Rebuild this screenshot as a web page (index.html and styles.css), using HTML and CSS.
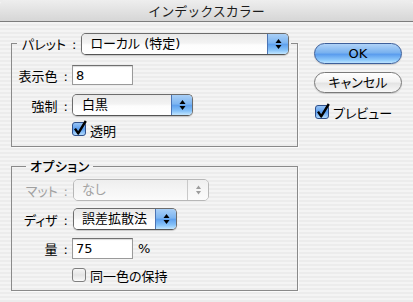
FILE: index.html
```html
<!DOCTYPE html>
<html lang="ja">

<head>
    <meta charset="UTF-8">
    <title>インデックスカラー</title>
    <link rel="stylesheet" href="styles.css">
</head>

<body>
    <div class="window">
        <div class="titlebar">インデックスカラー</div>

        <div class="content">
            <div class="groups">
                <fieldset class="group group-palette">
                    <legend class="palette-legend">
                        <span class="legend-label">パレット<span class="colon">:</span></span>
                        <span class="popup popup-palette">
                            <span class="popup-text">ローカル (特定)</span>
                            <span class="popup-arrows">
                                <svg width="7" height="12" viewBox="0 0 7 12"><polygon points="3.5,1 6.5,5 0.5,5" /><polygon points="0.5,7 6.5,7 3.5,11" /></svg>
                            </span>
                        </span>
                    </legend>

                    <div class="row row-colors">
                        <span class="label">表示色<span class="colon">:</span></span>
                        <span class="field">8</span>
                    </div>
                    <div class="row row-forced">
                        <span class="label">強制<span class="colon">:</span></span>
                        <span class="popup popup-forced">
                            <span class="popup-text">白黒</span>
                            <span class="popup-arrows">
                                <svg width="7" height="12" viewBox="0 0 7 12"><polygon points="3.5,1 6.5,5 0.5,5" /><polygon points="0.5,7 6.5,7 3.5,11" /></svg>
                            </span>
                        </span>
                    </div>
                    <div class="row row-check">
                        <span class="label"></span>
                        <span class="check checked">
                            <svg width="17" height="17" viewBox="0 0 17 17">
                                <defs>
                                    <linearGradient id="blueBox" x1="0" y1="0" x2="0" y2="1">
                                        <stop offset="0" stop-color="#9cc6f4" />
                                        <stop offset="0.5" stop-color="#5a9def" />
                                        <stop offset="1" stop-color="#b9e0ff" />
                                    </linearGradient>
                                </defs>
                                <rect x="0.5" y="2.5" width="13" height="13" rx="2.5" fill="url(#blueBox)" stroke="#2f4f8a" />
                                <path d="M3 8.6 L6.2 13.4 L13.8 1" fill="none" stroke="#000" stroke-width="2.4" stroke-linejoin="round" />
                            </svg>
                            <span class="check-text">透明</span>
                        </span>
                    </div>
                </fieldset>

                <fieldset class="group group-options">
                    <legend class="options-legend">オプション</legend>

                    <div class="row row-matte">
                        <span class="label disabled">マット<span class="colon">:</span></span>
                        <span class="popup popup-matte is-disabled">
                            <span class="popup-text">なし</span>
                            <span class="popup-arrows">
                                <svg width="7" height="12" viewBox="0 0 7 12"><polygon points="3.5,1.5 6,5 1,5" /><polygon points="1,7 6,7 3.5,10.5" /></svg>
                            </span>
                        </span>
                    </div>
                    <div class="row row-dither">
                        <span class="label">ディザ<span class="colon">:</span></span>
                        <span class="popup popup-dither">
                            <span class="popup-text">誤差拡散法</span>
                            <span class="popup-arrows">
                                <svg width="7" height="12" viewBox="0 0 7 12"><polygon points="3.5,1 6.5,5 0.5,5" /><polygon points="0.5,7 6.5,7 3.5,11" /></svg>
                            </span>
                        </span>
                    </div>
                    <div class="row row-amount">
                        <span class="label">量<span class="colon">:</span></span>
                        <span class="field">75</span>
                        <span class="unit">%</span>
                    </div>
                    <div class="row row-check">
                        <span class="label"></span>
                        <span class="check">
                            <span class="box"></span>
                            <span class="check-text">同一色の保持</span>
                        </span>
                    </div>
                </fieldset>
            </div>

            <div class="actions">
                <span class="button button-default">OK</span>
                <span class="button">キャンセル</span>
                <span class="check preview">
                    <svg width="17" height="17" viewBox="0 0 17 17">
                        <rect x="0.5" y="2.5" width="13" height="13" rx="2.5" fill="url(#blueBox)" stroke="#2f4f8a" />
                        <path d="M3 8.6 L6.2 13.4 L13.8 1" fill="none" stroke="#000" stroke-width="2.4" stroke-linejoin="round" />
                    </svg>
                    <span class="check-text">プレビュー</span>
                </span>
            </div>
        </div>
    </div>
</body>

</html>
```

FILE: styles.css
```css
body {
    margin: 0;
    font-family: "DejaVu Sans", "Noto Sans CJK JP", sans-serif;
    font-size: 13px;
    color: #000;
    background: repeating-linear-gradient(#ececec 0, #ececec 2px, #f4f4f4 2px, #f4f4f4 4px);
}

.window {
    width: 413px;
    height: 302px;
    overflow: hidden;
}

.titlebar {
    height: 21px;
    line-height: 22px;
    text-align: center;
    color: #1c1c1c;
    font-family: "Noto Sans CJK JP", sans-serif;
    background: linear-gradient(#eeeeee, #d6d6d6);
    border-bottom: 1px solid #7c7c7c;
    border-radius: 5px 5px 0 0;
}

.content {
    display: flex;
    padding: 11px 0 0 11px;
}

.groups {
    width: 287px;
}

/* group boxes */

.group {
    margin: 0;
    padding: 11px 0 8px 0;
    border: 1px solid #8a8a8a;
    box-shadow: 1px 1px 0 #fbfbfb;
    min-inline-size: 0;
}

.palette-legend {
    display: flex;
    align-items: center;
    margin-left: 5px;
    padding: 0 2px 0 5px;
    height: 21px;
}

.legend-label {
    font-feature-settings: "palt" 1;
    margin-right: 5px;
}

.group-options {
    margin-top: 11px;
    padding: 5px 0 7px 0;
}

.options-legend {
    margin-left: 14px;
    padding: 0 3px 0 4px;
    line-height: 16px;
    font-weight: 500;
    font-family: "Noto Sans CJK JP", sans-serif;
    font-feature-settings: "palt" 1;
    letter-spacing: 0.5px;
}

.colon {
    margin-left: 6px;
}

.row {
    display: flex;
    align-items: center;
}

.row .label {
    width: 56px;
    margin-right: 4px;
    text-align: right;
    font-feature-settings: "palt" 1;
    white-space: nowrap;
}

.label.disabled {
    color: #a0a0a0;
}

.row-colors { height: 20px; }
.row-forced { height: 22px; margin-top: 9px; }
.row-check { height: 16px; margin-top: 6px; }

.row-matte { height: 22px; }
.row-dither { height: 22px; margin-top: 7px; }
.row-amount { height: 21px; margin-top: 8px; }
.group-options .row-check { margin-top: 8px; }

/* text fields */

.field {
    box-sizing: border-box;
    width: 61px;
    height: 100%;
    padding-left: 3px;
    line-height: 19px;
    background: #fff;
    border: 1px solid #9a9a9a;
    border-top-color: #707070;
    box-shadow: inset 0 1px 1px rgba(0, 0, 0, 0.15);
}

.unit {
    margin-left: 5px;
}

/* popup menus */

.popup {
    box-sizing: border-box;
    display: flex;
    height: 22px;
    border: 1px solid #6c6c6c;
    border-bottom-color: #555;
    border-radius: 5px;
    overflow: hidden;
    box-shadow: 0 1px 1px rgba(0, 0, 0, 0.18);
    font-feature-settings: "palt" 1;
}

.popup-text {
    flex: 1;
    padding-left: 8px;
    line-height: 20px;
    white-space: nowrap;
    background: linear-gradient(#e9e9e9 0%, #f3f3f3 45%, #fdfdfd 55%, #ffffff 100%);
}

.popup-arrows {
    width: 20px;
    display: flex;
    align-items: center;
    justify-content: center;
    border-left: 1px solid #4b74b4;
    background: linear-gradient(#a9cff6 0%, #7db5f1 45%, #5fa1ee 52%, #86c2f8 80%, #c2e6ff 100%);
}

.popup-arrows svg {
    fill: #000;
}

.popup-palette { width: 208px; }
.popup-forced { width: 121px; }
.popup-forced .popup-text { padding-left: 9px; }
.popup-matte { width: 136px; margin-left: 1px; }
.popup-dither { width: 104px; margin-left: 1px; }

.popup.is-disabled {
    border-color: #b7b7b7;
    box-shadow: none;
}

.is-disabled .popup-text {
    color: #a3a3a3;
    background: linear-gradient(#eeeeee 0%, #f5f5f5 50%, #fbfbfb 100%);
}

.is-disabled .popup-arrows {
    border-left-color: #c9c9c9;
    background: linear-gradient(#efefef 0%, #f6f6f6 50%, #fbfbfb 100%);
}

.is-disabled .popup-arrows svg {
    fill: #9c9c9c;
}

/* checkboxes */

.check {
    display: flex;
    align-items: center;
    font-feature-settings: "palt" 1;
}

.check svg {
    margin-top: -3px;
}

.check-text {
    margin-left: 1px;
}

.box {
    box-sizing: border-box;
    width: 14px;
    height: 14px;
    margin-right: 3px;
    border: 1px solid #7f7f7f;
    border-radius: 3px;
    background: linear-gradient(#f6f6f6 0%, #e4e4e4 50%, #fafafa 100%);
}

/* buttons */

.actions {
    margin-left: 16px;
    padding-top: 10px;
    display: flex;
    flex-direction: column;
    width: 88px;
}

.button {
    box-sizing: border-box;
    height: 21px;
    margin-bottom: 8px;
    line-height: 19px;
    text-align: center;
    border: 1px solid #7a7a7a;
    border-radius: 11px;
    background: linear-gradient(#ffffff 0%, #f3f3f3 45%, #e4e4e4 55%, #f8f8f8 100%);
    box-shadow: 0 1px 1px rgba(0, 0, 0, 0.15);
    font-feature-settings: "palt" 1;
}

.button-default {
    border-color: #3d5f9a;
    background: linear-gradient(#b0d3f8 0%, #7ab2ef 45%, #5b9dee 55%, #8fcafb 85%, #bde4ff 100%);
}

.preview {
    margin-top: 2px;
    margin-left: 1px;
}
```
